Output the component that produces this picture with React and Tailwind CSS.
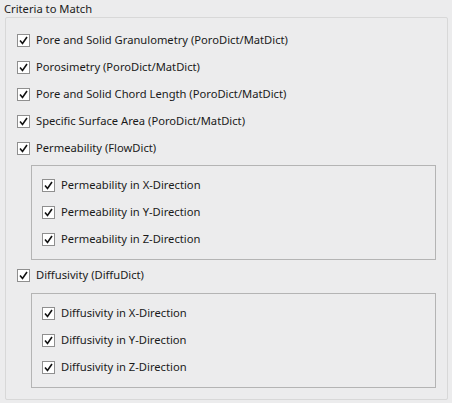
function Check({ label }) {
  return (
    <label className="flex h-[27px] items-center gap-[6px]">
      <span className="flex h-[13px] w-[13px] shrink-0 items-center justify-center border border-[#8f8f8f] bg-white">
        <svg width="9" height="9" viewBox="0 0 9 9">
          <path d="M1 4.5 L3.5 7.5 L8 1" fill="none" stroke="#111" strokeWidth="1.6" />
        </svg>
      </span>
      <span className="text-[11.2px] text-[#1a1a1a]">{label}</span>
    </label>
  )
}

function SubGroup({ items }) {
  return (
    <div className="ml-[14px] mr-[11px] border border-[#b4b4b4] pl-[10px] pt-[6px] pb-[6px]">
      {items.map((t) => (
        <Check key={t} label={t} />
      ))}
    </div>
  )
}

export default function App() {
  return (
    <div className="h-[403px] w-[452px] bg-[#ececed] font-['Noto_Sans',sans-serif]">
      <div className="h-[17px] pl-[4px] pt-[2px] text-[11.2px] leading-[14px] text-[#202020]">Criteria to Match</div>
      <div className="ml-[5px] mr-[4px] h-[383px] rounded-[2px] border border-[#d8d8d8] pl-[11px] pt-[9px]">
        <Check label="Pore and Solid Granulometry (PoroDict/MatDict)" />
        <Check label="Porosimetry (PoroDict/MatDict)" />
        <Check label="Pore and Solid Chord Length (PoroDict/MatDict)" />
        <Check label="Specific Surface Area (PoroDict/MatDict)" />
        <Check label="Permeability (FlowDict)" />
        <div className="mt-[3px]">
          <SubGroup
            items={[
              'Permeability in X-Direction',
              'Permeability in Y-Direction',
              'Permeability in Z-Direction',
            ]}
          />
        </div>
        <div className="mt-[2px]">
          <Check label="Diffusivity (DiffuDict)" />
        </div>
        <div className="mt-[4px]">
          <SubGroup
            items={[
              'Diffusivity in X-Direction',
              'Diffusivity in Y-Direction',
              'Diffusivity in Z-Direction',
            ]}
          />
        </div>
      </div>
    </div>
  )
}
